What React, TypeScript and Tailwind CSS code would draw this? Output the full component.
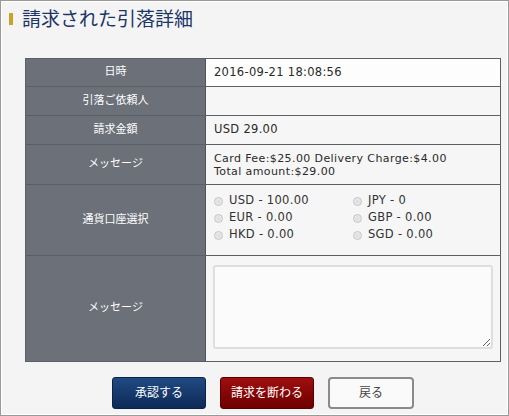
import React, { useState } from 'react';

const currencies = [
  { code: 'USD', amount: '100.00' },
  { code: 'JPY', amount: '0' },
  { code: 'EUR', amount: '0.00' },
  { code: 'GBP', amount: '0.00' },
  { code: 'HKD', amount: '0.00' },
  { code: 'SGD', amount: '0.00' },
];

const labelCls =
  "w-[180px] shrink-0 bg-[#6b7079] text-white text-[11px] flex items-center justify-center border-r border-[#4e535b]";
const valueCls = "flex-1 bg-[#f6f6f6] px-2 text-[11.5px] tracking-[0.3px] text-[#2a2a2a] flex items-center";

const App: React.FC = () => {
  const [selected, setSelected] = useState('');
  const [message, setMessage] = useState('');

  return (
    <div
      className="w-[509px] h-[416px] bg-[#f4f4f4] border border-[#9a9a9a] shadow-[inset_0_0_0_1px_#ffffff] overflow-hidden"
      style={{ fontFamily: '"DejaVu Sans", "Noto Sans CJK JP", sans-serif' }}
    >
      {/* 見出し */}
      <h1 className="flex items-center h-[20px] mt-[8px] ml-[8px]">
        <span className="w-[4px] h-[12px] bg-[#c9a227] mr-[9px]"></span>
        <span className="text-[19px] leading-none text-[#1b3566]">請求された引落詳細</span>
      </h1>

      {/* 詳細テーブル */}
      <div className="mt-[29px] ml-[24px] w-[476px] border border-[#5c5f64]">
        <div className="flex h-[28px] border-b border-[#5c5f64]">
          <div className={labelCls}>日時</div>
          <div className={`${valueCls} bg-[#fdfdfd]`}>2016-09-21 18:08:56</div>
        </div>
        <div className="flex h-[29px] border-b border-[#5c5f64]">
          <div className={labelCls}>引落ご依頼人</div>
          <div className={valueCls}></div>
        </div>
        <div className="flex h-[29px] border-b border-[#5c5f64]">
          <div className={labelCls}>請求金額</div>
          <div className={valueCls}>USD 29.00</div>
        </div>
        <div className="flex h-[40px] border-b border-[#5c5f64]">
          <div className={labelCls}>メッセージ</div>
          <div className="flex-1 bg-[#f6f6f6] px-2 pt-[1px] text-[11px] tracking-[0.4px] leading-[13px] text-[#2a2a2a] flex flex-col justify-center">
            <span>Card Fee:$25.00 Delivery Charge:$4.00</span>
            <span>Total amount:$29.00</span>
          </div>
        </div>
        <div className="flex h-[71px] border-b border-[#5c5f64]">
          <div className={labelCls}>通貨口座選択</div>
          <div className="flex-1 bg-[#f6f6f6] pl-[8px] pt-[9px]">
            <div className="grid grid-cols-[139px_1fr] gap-y-[3px]">
              {currencies.map((c) => (
                <label key={c.code} className="flex items-center h-[14px] text-[11.5px] tracking-[0.3px] text-[#333] cursor-pointer">
                  <input
                    type="radio"
                    name="currency"
                    value={c.code}
                    checked={selected === c.code}
                    onChange={() => setSelected(c.code)}
                    className="appearance-none w-[9px] h-[9px] rounded-full border border-[#c4c4c4] bg-[radial-gradient(circle,#dcdcdc_0%,#f0f0f0_100%)] mr-[6px] checked:bg-[#555]"
                  />
                  {c.code} - {c.amount}
                </label>
              ))}
            </div>
          </div>
        </div>
        <div className="flex h-[105px]">
          <div className={labelCls}>メッセージ</div>
          <div className="flex-1 bg-[#f6f6f6] pl-[7px] pr-[7px] pt-[9px]">
            <textarea
              value={message}
              onChange={(e) => setMessage(e.target.value)}
              className="block w-full h-[84px] rounded-[3px] border-2 border-[#dedede] bg-[#fbfbfb] outline-none text-[12px] p-1"
            />
          </div>
        </div>
      </div>

      {/* ボタン */}
      <div className="ml-[24px] w-[476px] flex justify-center gap-[14px] mt-[15px]">
        <button className="w-[94px] h-[32px] rounded-[3px] bg-gradient-to-b from-[#214a82] to-[#0c2a57] text-white text-[12px] border border-[#0b2349]">
          承認する
        </button>
        <button className="w-[94px] h-[32px] rounded-[3px] bg-gradient-to-b from-[#9e1010] to-[#6e0000] text-white text-[12px] border border-[#5a0000]">
          請求を断わる
        </button>
        <button className="w-[86px] h-[32px] rounded-[4px] bg-[#fafafa] text-[#444] text-[12px] border-2 border-[#8a8a8a]">
          戻る
        </button>
      </div>
    </div>
  );
};

export default App;
